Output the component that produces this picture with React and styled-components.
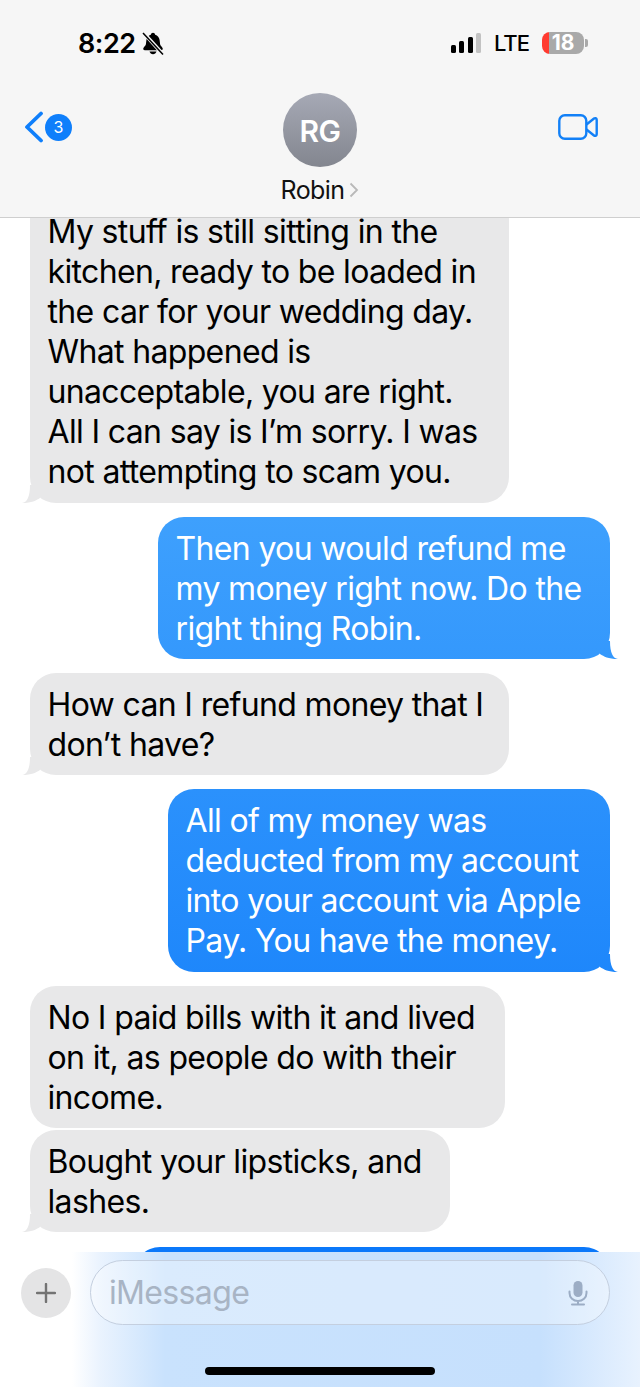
import React from 'react';
import styled, { createGlobalStyle } from 'styled-components';

const GlobalStyle = createGlobalStyle`
	html, body {
		margin: 0;
		padding: 0;
		background: #ffffff;
	}
	* {
		box-sizing: border-box;
	}
`;

const FONT = `"Inter", "Roboto", "Liberation Sans", sans-serif`;
const BLUE_FILL = 'linear-gradient(180deg, #5fb4ff 0px, #3ea0fd 517px, #0b78fa 1250px, #0b78fa 1387px) fixed';
const GRAY_FILL = '#e8e8e9';

const messages = [
	{
		id: 1,
		mine: false,
		width: 479,
		top: -58,
		tall: true,
		lines: [
			'\u00a0',
			'My stuff is still sitting in the',
			'kitchen, ready to be loaded in',
			'the car for your wedding day.',
			'What happened is',
			'unacceptable, you are right.',
			'All I can say is I’m sorry. I was',
			'not attempting to scam you.',
		],
	},
	{
		id: 2,
		mine: true,
		width: 452,
		top: 14,
		lines: ['Then you would refund me', 'my money right now. Do the', 'right thing Robin.'],
	},
	{
		id: 3,
		mine: false,
		width: 479,
		top: 14,
		lines: ['How can I refund money that I', 'don’t have?'],
	},
	{
		id: 4,
		mine: true,
		width: 442,
		top: 14,
		tall: true,
		lines: ['All of my money was', 'deducted from my account', 'into your account via Apple', 'Pay. You have the money.'],
	},
	{
		id: 5,
		mine: false,
		width: 475,
		top: 14,
		noTail: true,
		lines: ['No I paid bills with it and lived', 'on it, as people do with their', 'income.'],
	},
	{
		id: 6,
		mine: false,
		width: 420,
		top: 2,
		lines: ['Bought your lipsticks, and', 'lashes.'],
	},
	{
		id: 7,
		mine: true,
		width: 476,
		top: 15,
		lines: ['\u00a0', '\u00a0'],
	},
];

function BellSlash() {
	return (
		<svg width="22" height="23" viewBox="0 0 22 23">
			<path
				d="M11 .8c-1.100 0-2 .8-2.200 1.900C6.300 3.400 4.800 5.300 4.400 8L3.900 12.300c-.2 1.500-2.700 3-2.700 4.500 0 .9.600 1.400 1.500 1.400h16.600c.9 0 1.500-.5 1.500-1.400 0-1.500-2.500-3-2.700-4.500L17.600 8c-.4-2.700-1.900-4.600-4.400-5.300C13 1.600 12.100.8 11 .8z"
				fill="#000"
			/>
			<path d="M7.500 19.500c.4 1.600 1.900 2.800 3.500 2.800s3.100-1.200 3.500-2.800z" fill="#000" />
			<path d="M1.500 .8l19 21" stroke="#f6f6f6" strokeWidth="3.600" />
			<path d="M1 1l20 21.500" stroke="#000" strokeWidth="1.500" />
		</svg>
	);
}

function Microphone() {
	return (
		<svg width="20" height="26" viewBox="0 0 20 26" fill="none">
			<rect x="5.500" y="1" width="9" height="16" rx="4.500" fill="#9cadc5" />
			<path d="M1.500 11.500v1.500c0 4.700 3.800 8 8.500 8s8.500-3.300 8.500-8v-1.500M10 21v3.500M4 24.500h12" stroke="#9cadc5" strokeWidth="2" strokeLinecap="round" />
		</svg>
	);
}

function App() {
	return (
		<Page>
			<GlobalStyle />
			<Header>
				<StatusBar>
					<StatusLeft>
						<Clock>8:22</Clock>
						<BellSlash />
					</StatusLeft>
					<StatusRight>
						<Signal>
							<SignalBar $height={8} />
							<SignalBar $height={12} />
							<SignalBar $height={16} />
							<SignalBar $height={20} $off />
						</Signal>
						<Network>LTE</Network>
						<Battery>
							<BatteryBody>18</BatteryBody>
							<BatteryNub />
						</Battery>
					</StatusRight>
				</StatusBar>
				<NavRow>
					<BackButton>
						<svg width="20" height="32" viewBox="0 0 20 32" fill="none">
							<path d="M17 2.500L3 16l14 13.500" stroke="#0f7ffb" strokeWidth="3.800" strokeLinecap="round" strokeLinejoin="round" />
						</svg>
						<UnreadBadge>3</UnreadBadge>
					</BackButton>
					<Avatar>RG</Avatar>
					<VideoButton>
						<svg width="40" height="26" viewBox="0 0 40 26" fill="none">
							<rect x="1.300" y="1.300" width="27" height="23.400" rx="5.500" stroke="#1280f7" strokeWidth="2.400" />
							<path d="M28.500 10.500l7.500-6c.9-.7 2.700-.4 2.700 1.200v14.600c0 1.600-1.800 1.900-2.700 1.200l-7.500-6" stroke="#1280f7" strokeWidth="2.400" strokeLinejoin="round" />
						</svg>
					</VideoButton>
				</NavRow>
				<ContactName>
					Robin
					<svg width="10" height="16" viewBox="0 0 10 16" fill="none">
						<path d="M1.500 1.500L8 8l-6.500 6.500" stroke="#b9b9b9" strokeWidth="1.800" />
					</svg>
				</ContactName>
			</Header>
			<Thread>
				{messages.map((message) => (
					<Bubble key={message.id} $mine={message.mine} $width={message.width} $top={message.top} $tall={message.tall} $noTail={message.noTail}>
						{message.lines.map((line, i) => (
							<Line key={i}>{line}</Line>
						))}
					</Bubble>
				))}
			</Thread>
			<Composer>
				<InputRow>
					<PlusButton>
						<svg width="20" height="20" viewBox="0 0 20 20" fill="none">
							<path d="M10 1v18M1 10h18" stroke="#737373" strokeWidth="2.400" strokeLinecap="round" />
						</svg>
					</PlusButton>
					<InputField>
						<Placeholder>iMessage</Placeholder>
						<Microphone />
					</InputField>
				</InputRow>
				<HomeIndicator />
			</Composer>
		</Page>
	);
}

const Page = styled.div`
	width: 640px;
	height: 1387px;
	display: flex;
	flex-direction: column;
	overflow: hidden;
	background: #ffffff;
	font-family: ${FONT};
	color: #000000;
`;

const Header = styled.header`
	height: 218px;
	flex: none;
	position: relative;
	z-index: 1;
	background: #f6f6f6;
	border-bottom: 1px solid #cfcfcf;
	display: flex;
	flex-direction: column;
`;

const StatusBar = styled.div`
	height: 86px;
	padding: 0 52px 0 78px;
	display: flex;
	align-items: center;
	justify-content: space-between;
`;

const StatusLeft = styled.div`
	display: flex;
	align-items: center;
	gap: 6px;
`;

const Clock = styled.span`
	font-size: 27px;
	font-weight: 600;
	letter-spacing: -0.5px;
`;

const StatusRight = styled.div`
	display: flex;
	align-items: center;
	gap: 13px;
`;

const Signal = styled.div`
	display: flex;
	align-items: flex-end;
	gap: 3.500px;
	height: 20px;
`;

const SignalBar = styled.span`
	width: 5px;
	height: ${(p) => p.$height}px;
	border-radius: 1.500px;
	background: ${(p) => (p.$off ? '#c2c2c2' : '#000000')};
`;

const Network = styled.span`
	font-size: 22px;
	font-weight: 500;
	letter-spacing: -1px;
`;

const Battery = styled.div`
	display: flex;
	align-items: center;
	gap: 1px;
`;

const BatteryBody = styled.div`
	width: 42px;
	height: 22px;
	border-radius: 8px;
	background: linear-gradient(90deg, #ff3b30 0, #ff3b30 7px, #a9a9a9 7px);
	color: #ffffff;
	font-size: 21px;
	font-weight: 700;
	line-height: 22px;
	text-align: center;
`;

const BatteryNub = styled.span`
	width: 3px;
	height: 8px;
	border-radius: 0 2px 2px 0;
	background: #a9a9a9;
`;

const NavRow = styled.div`
	margin-top: 7px;
	height: 74px;
	display: grid;
	grid-template-columns: 1fr auto 1fr;
	align-items: center;
`;

const BackButton = styled.div`
	display: flex;
	align-items: center;
	gap: 1px;
	padding-left: 24px;
	margin-bottom: 6px;
`;

const UnreadBadge = styled.span`
	width: 27px;
	height: 27px;
	border-radius: 50%;
	background: #0f7ffb;
	color: #ffffff;
	font-size: 16px;
	line-height: 27px;
	text-align: center;
`;

const Avatar = styled.div`
	width: 74px;
	height: 74px;
	border-radius: 50%;
	background: linear-gradient(180deg, #a6a9b5, #83868f);
	color: #ffffff;
	font-size: 30px;
	font-weight: 600;
	line-height: 76px;
	text-align: center;
	letter-spacing: -0.5px;
`;

const VideoButton = styled.div`
	display: flex;
	justify-content: flex-end;
	padding-right: 42px;
	margin-bottom: 6px;
`;

const ContactName = styled.div`
	margin-top: 8px;
	display: flex;
	align-items: center;
	justify-content: center;
	gap: 5px;
	font-size: 25px;
	line-height: 30px;
	letter-spacing: -0.6px;
	color: #111111;
`;

const Thread = styled.main`
	flex: 1;
	min-height: 0;
	overflow: hidden;
	padding: 0 30px;
	display: flex;
	flex-direction: column;
`;

const Bubble = styled.div`
	flex: none;
	position: relative;
	width: ${(p) => p.$width}px;
	margin-top: ${(p) => p.$top}px;
	align-self: ${(p) => (p.$mine ? 'flex-end' : 'flex-start')};
	padding: ${(p) => (p.$tall ? '12px 17.500px 11px' : '12px 17.500px 10px')};
	border-radius: 26px;
	background: ${(p) => (p.$mine ? BLUE_FILL : GRAY_FILL)};
	color: ${(p) => (p.$mine ? '#ffffff' : '#000000')};
	font-size: 32px;
	line-height: 40px;
	letter-spacing: -0.650px;

	&::after {
		content: '';
		display: ${(p) => (p.$noTail ? 'none' : 'block')};
		position: absolute;
		bottom: 0;
		width: 20px;
		height: 20px;
		background: ${(p) => (p.$mine ? BLUE_FILL : GRAY_FILL)};
		${(p) => (p.$mine ? 'right: -8px;' : 'left: -8px;')}
		clip-path: ${(p) =>
			p.$mine
				? "path('M20 20C15 19.500 12 14 12 2L2 2L2 15C6 17.500 10 20 20 20Z')"
				: "path('M0 20C5 19.500 8 14 8 2L18 2L18 15C14 17.500 10 20 0 20Z')"};
	}
`;

const Line = styled.span`
	display: block;
	white-space: nowrap;
`;

const Composer = styled.footer`
	height: 135px;
	flex: none;
	position: relative;
	padding: 8px 30px 12px 21px;
	display: flex;
	flex-direction: column;
	justify-content: space-between;
	background: linear-gradient(90deg, #ffffff 0, #ffffff 72px, #eaf3fe 100px, #c9e2fd 165px, #c6e0fd 540px, #e8f2fe 640px);
`;

const InputRow = styled.div`
	display: flex;
	align-items: center;
	gap: 19px;
`;

const PlusButton = styled.div`
	width: 50px;
	height: 50px;
	flex: none;
	border-radius: 50%;
	background: #e4e4e5;
	display: flex;
	align-items: center;
	justify-content: center;
`;

const InputField = styled.div`
	flex: 1;
	height: 65px;
	padding: 0 21px 0 18px;
	border: 1.500px solid #c4cfdf;
	border-radius: 33px;
	background: rgba(255, 255, 255, 0.32);
	display: flex;
	align-items: center;
	justify-content: space-between;
`;

const Placeholder = styled.span`
	font-size: 32px;
	letter-spacing: -0.650px;
	color: #a8b4c4;
`;

const HomeIndicator = styled.div`
	align-self: center;
	width: 230px;
	height: 8px;
	margin-left: 9px;
	border-radius: 4px;
	background: #000000;
`;

export default App;
